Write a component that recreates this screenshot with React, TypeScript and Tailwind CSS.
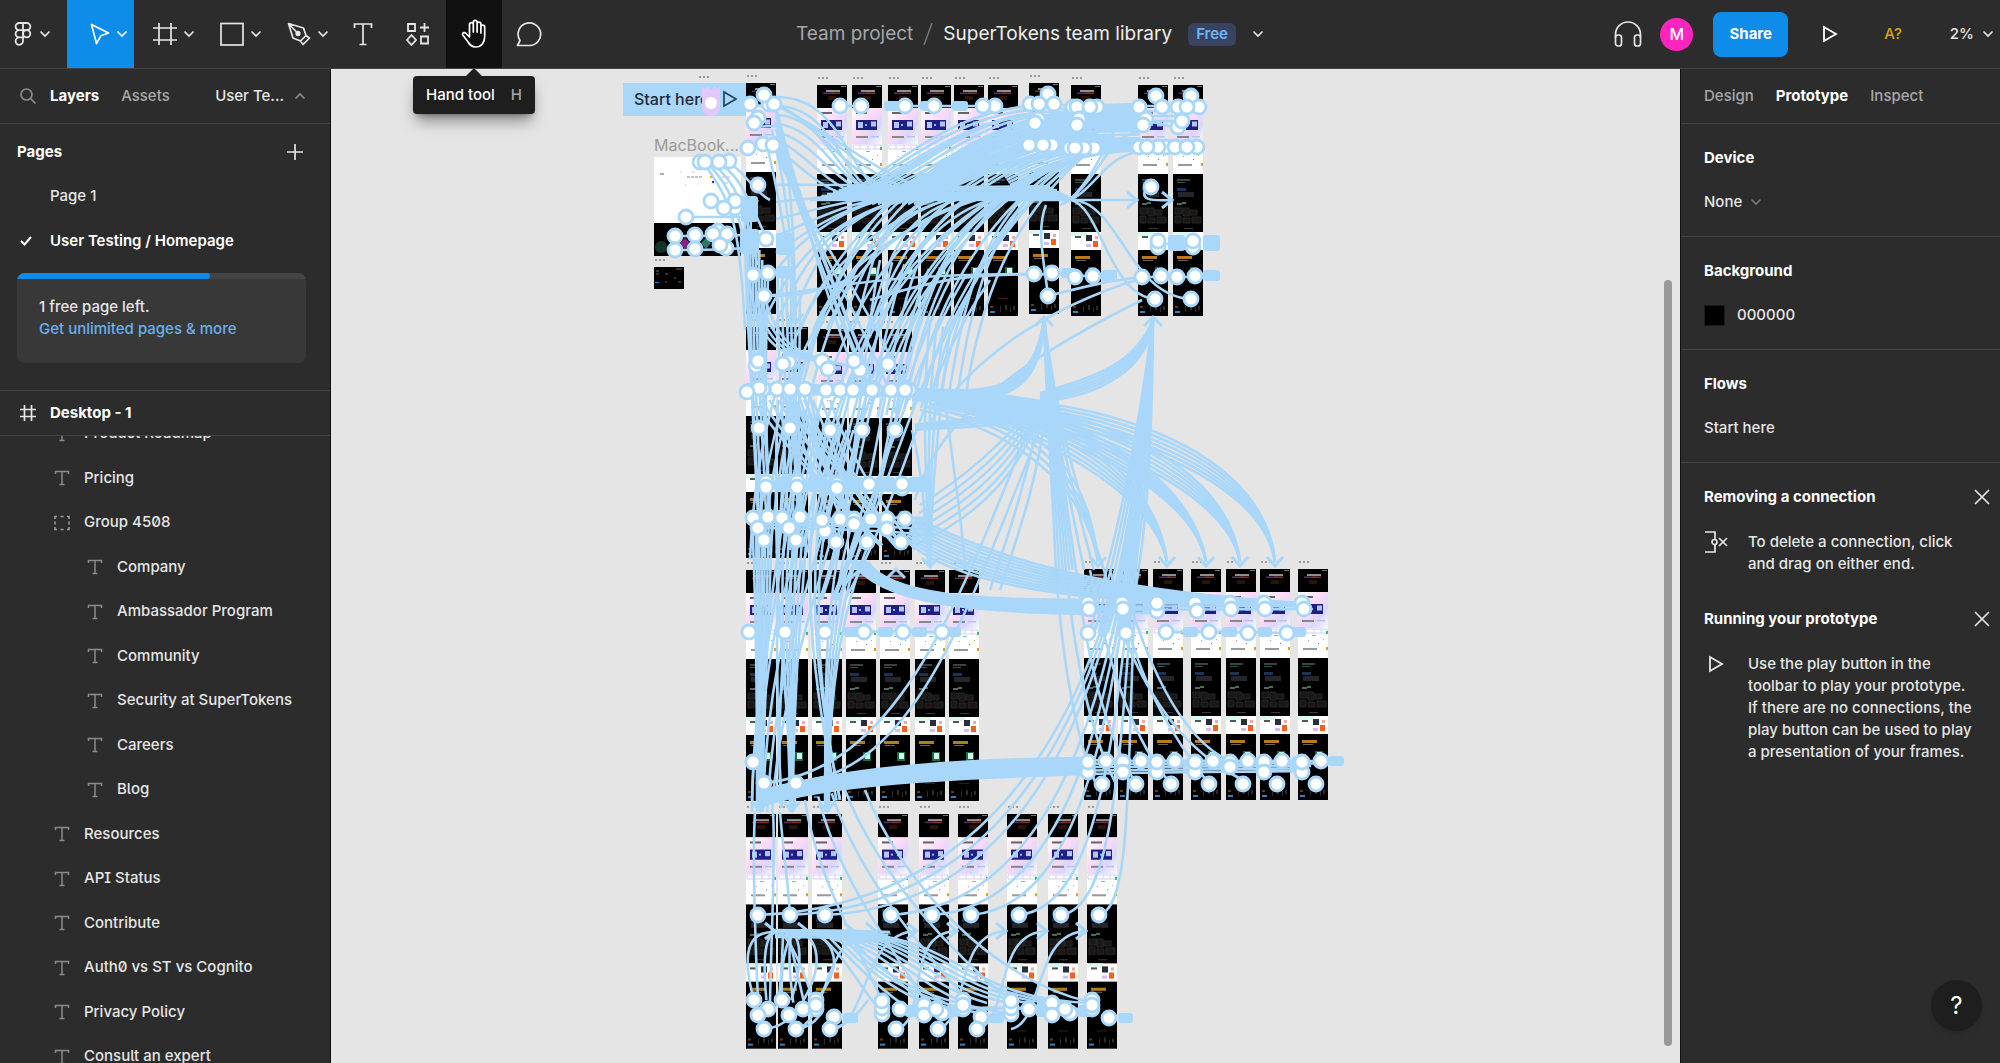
import React from "react";

type P = { className?: string };

const Chevron = ({ className = "" }: P) => (
  <svg className={`h-2 w-3 shrink-0 ${className}`} viewBox="0 0 12 8" fill="none" stroke="currentColor" strokeWidth="1.7">
    <path d="M1.5 1.5 6 6l4.5-4.5" />
  </svg>
);

const svgBase = { fill: "none", stroke: "currentColor", strokeWidth: 1.7 } as const;

const FigmaIcon = () => (
  <svg className="h-6 w-5" viewBox="0 0 20 24" {...svgBase} strokeWidth={1.8}>
    <path d="M10 1H6.2a3.6 3.6 0 0 0 0 7.2H10zM10 1h3.8a3.6 3.6 0 0 1 0 7.2H10zM10 8.2H6.2a3.6 3.6 0 0 0 0 7.2H10zM10 15.4H6.2a3.7 3.7 0 1 0 3.8 3.7z" />
    <circle cx="13.7" cy="11.8" r="3.6" />
  </svg>
);
const MoveIcon = () => (
  <svg className="h-6 w-5" viewBox="0 0 20 24" {...svgBase}>
    <path d="M1.5 2.5 18.5 11l-7.700 2.800L6.500 21.500z" strokeLinejoin="round" />
  </svg>
);
const FrameIcon = () => (
  <svg className="size-6" viewBox="0 0 24 24" {...svgBase}>
    <path d="M6 1v22M18 1v22M0 6h24M0 18h24" />
  </svg>
);
const SquareIcon = () => (
  <svg className="size-6" viewBox="0 0 24 24" {...svgBase}>
    <rect x="1" y="1.500" width="22" height="21.500" />
  </svg>
);
const PenIcon = () => (
  <svg className="size-6" viewBox="0 0 24 24" {...svgBase} strokeLinejoin="round">
    <path d="M1.500 1.500 6 16l7.500 3 5.500-5.500-2.500-7.500zM1.500 1.500l9 9.500M13.500 19l2.500 3.500 6.500-6.500-3.500-2.500" />
    <circle cx="11" cy="11.500" r="1.800" fill="currentColor" />
  </svg>
);
const TextIcon = () => (
  <svg className="size-6" viewBox="0 0 24 24" {...svgBase}>
    <path d="M3.500 6V2h17v4M12 2v20.500M8.500 22.500h7" />
  </svg>
);
const ResourcesIcon = () => (
  <svg className="size-6" viewBox="0 0 24 24" {...svgBase} strokeWidth={1.8}>
    <path d="M2 2h7v7H2zM18.500 1v9M14 5.500h9M15 14.500h7v7h-7zM5.500 13 1 18l4.500 5 4.500-5z" />
  </svg>
);
const HandIcon = () => (
  <svg className="h-[30px] w-7" viewBox="0 0 28 30" {...svgBase} strokeLinecap="round" strokeLinejoin="round">
    <path d="M9.500 16V5.500a1.900 1.900 0 0 1 3.800 0V13M13.300 6V3.300a1.900 1.900 0 0 1 3.800 0V13M17.100 5a1.900 1.900 0 0 1 3.800 0v9M20.900 8a1.900 1.900 0 0 1 3.800 0v9.500c0 6-3.200 10.500-9 10.500-4.500 0-6.300-2.500-8-5.500L2.800 16c-1-1.900 1.500-3.300 3.200-1.500L9.500 18V7" />
  </svg>
);
const CommentIcon = () => (
  <svg className="h-[26px] w-[26px]" viewBox="0 0 26 26" {...svgBase} strokeLinejoin="round">
    <path d="M1.500 24.500h12A11.300 11.300 0 1 0 4 19.500z" />
  </svg>
);
const HeadphonesIcon = () => (
  <svg className="size-7" viewBox="0 0 28 28" {...svgBase}>
    <path d="M1.500 17.500v-3a12.500 12.500 0 0 1 25 0v3" />
    <rect x="1.500" y="15" width="6" height="11" rx="2.500" />
    <rect x="20.500" y="15" width="6" height="11" rx="2.500" />
  </svg>
);
const PlayIcon = ({ className = "" }: P) => (
  <svg className={`h-[18px] w-4 ${className}`} viewBox="0 0 16 18" {...svgBase} strokeWidth={1.8}>
    <path d="M2 2v14l12-7z" />
  </svg>
);
const CloseIcon = () => (
  <svg className="size-4" viewBox="0 0 16 16" {...svgBase}>
    <path d="m1 1 14 14M15 1 1 15" />
  </svg>
);
const LayerText = () => (
  <svg className="size-4 shrink-0 text-[#8a8a8a]" viewBox="0 0 16 16" {...svgBase} strokeWidth={1.5}>
    <path d="M1.500 4V1.500h13V4M8 1.500v13M5.500 14.500h5" />
  </svg>
);
const LayerGroup = () => (
  <svg className="size-4 shrink-0 text-[#9a9a9a]" viewBox="0 0 16 16" {...svgBase} strokeWidth={1.6}>
    <path d="M1 4V1.500h2M6.500 1.500h3M13 1.500h2V4M1 6.500v3M15 6.500v3M1 12v2.500h2M6.500 14.500h3M13 14.500h2V12" />
  </svg>
);

/* ---------- canvas data ---------- */

const BLUE = "#a9d7fa";

const frames: [number, number][] = [
  [746, 83], [817, 85], [852, 85], [888, 85], [921, 85], [954, 85], [988, 85], [1029, 83], [1071, 85], [1138, 85], [1173, 85],
  [746, 327], [778, 327], [817, 329], [849, 329], [882, 329],
  [746, 570], [778, 570], [812, 570], [846, 570], [880, 570], [915, 570], [949, 570],
  [1084, 569], [1118, 569], [1153, 569], [1191, 569], [1226, 569], [1260, 569], [1298, 569],
  [746, 814], [778, 814], [812, 814], [878, 814], [919, 814], [958, 814], [1007, 814], [1048, 814], [1087, 814],
];

const nodes: [number, number][] = [
  [750, 104], [769, 104], [774, 104], [764, 95], [758, 118], [754, 123], [748, 148], [763, 144], [773, 145], [758, 185], [766, 239], [753, 275], [768, 273], [764, 296],
  [700, 162], [729, 161], [705, 162], [719, 162], [735, 208], [711, 201], [735, 201], [724, 208], [686, 217],
  [718, 231], [675, 236], [695, 235], [727, 234], [713, 234], [675, 250], [695, 249], [726, 248], [720, 245],
  [840, 106], [861, 106], [905, 106], [934, 106], [995, 106], [983, 106],
  [1048, 94], [1030, 104], [1054, 104], [1039, 104], [1038, 119], [1035, 123], [1052, 145], [1029, 145], [1043, 145],
  [1073, 107], [1097, 107], [1077, 107], [1090, 107], [1079, 119], [1077, 125], [1070, 148], [1094, 148], [1084, 148], [1075, 148],
  [1156, 96], [1139, 107], [1162, 107], [1146, 119], [1143, 125], [1139, 147], [1166, 147], [1158, 147], [1147, 147], [1151, 187],
  [1191, 96], [1199, 107], [1178, 107], [1187, 107], [1178, 127], [1182, 121], [1175, 147], [1197, 147], [1187, 147],
  [1158, 247], [1158, 241], [1193, 247], [1193, 241],
  [1034, 274], [1052, 273], [1048, 296], [1075, 277], [1093, 276], [1142, 277], [1161, 276], [1177, 277], [1195, 276], [1155, 299], [1191, 299],
  [756, 366], [758, 361], [789, 362], [783, 364], [822, 361], [828, 369], [860, 370], [854, 361], [888, 364],
  [763, 389], [759, 388], [747, 392], [777, 389], [790, 389], [805, 389], [826, 390], [840, 390], [853, 390], [875, 390], [872, 390], [891, 390], [909, 390], [905, 390],
  [759, 428], [790, 428], [830, 430], [862, 430], [895, 430],
  [766, 482], [766, 487], [797, 482], [797, 487], [837, 484], [837, 488], [869, 484], [902, 488], [902, 484],
  [753, 518], [768, 517], [782, 518], [800, 517], [758, 528], [789, 528], [825, 531], [822, 520], [840, 519], [854, 519], [854, 524], [871, 519], [887, 519], [887, 529], [905, 519],
  [764, 540], [796, 540], [836, 542], [867, 542], [901, 542],
  [749, 632], [785, 632], [825, 632], [864, 632], [903, 632], [942, 632], [753, 762], [764, 783], [796, 783],
  [1088, 603], [1089, 609], [1122, 603], [1123, 609], [1157, 611], [1157, 603], [1195, 603], [1197, 611], [1230, 603], [1231, 609], [1264, 603], [1265, 609], [1302, 603], [1304, 609],
  [1088, 633], [1126, 633], [1166, 632], [1209, 632], [1248, 633], [1287, 633],
  [1088, 772], [1088, 762], [1106, 761], [1123, 762], [1123, 772], [1141, 761], [1157, 772], [1157, 762], [1175, 761], [1195, 772], [1195, 762], [1213, 761], [1230, 762], [1230, 767], [1248, 761], [1264, 762], [1264, 772], [1282, 761], [1302, 772], [1302, 762], [1321, 761],
  [1102, 784], [1136, 784], [1171, 784], [1209, 784], [1243, 784], [1277, 784], [1316, 784],
  [758, 915], [790, 915], [825, 915], [891, 915], [932, 915], [971, 915], [1019, 915], [1061, 915], [1099, 915],
  [754, 1000], [768, 1009], [758, 1015], [782, 1000], [803, 1009], [789, 1015], [816, 1000], [816, 1009], [816, 1005], [834, 1017], [764, 1029], [796, 1029], [830, 1029],
  [882, 1014], [882, 1008], [882, 1001], [900, 1009], [896, 1029], [924, 1005], [924, 1015], [942, 1013], [936, 1009], [938, 1029], [963, 1000], [963, 1009], [963, 1005], [981, 1017], [977, 1029],
  [1011, 1014], [1011, 1008], [1011, 1001], [1029, 1009], [1052, 1003], [1052, 1015], [1070, 1013], [1065, 1009], [1092, 1000], [1092, 1009], [1092, 1005], [1109, 1018],
];

const pills: [number, number, number, number][] = [
  [741, 196, 17, 26], [740, 229, 19, 25], [776, 233, 18, 22], [776, 266, 16, 12], [884, 101, 16, 10], [920, 101, 15, 10], [952, 101, 16, 10],
  [1168, 235, 17, 16], [1203, 235, 17, 16], [1061, 268, 15, 10], [1101, 270, 16, 11], [1203, 270, 17, 11],
  [775, 477, 18, 15], [808, 477, 20, 15], [843, 477, 20, 15], [875, 477, 20, 15], [908, 477, 20, 15],
  [844, 627, 16, 10], [878, 627, 15, 10], [912, 627, 15, 10], [947, 627, 14, 10], [1183, 627, 15, 10], [1222, 627, 15, 10], [1258, 627, 14, 10], [1291, 627, 15, 10],
  [1328, 756, 16, 10], [1292, 756, 10, 12], [843, 1013, 15, 10], [989, 1013, 15, 10], [1118, 1013, 15, 10], [905, 1005, 14, 12], [946, 1005, 14, 12], [1036, 1003, 14, 14], [1078, 1005, 14, 12],
];

type Curve = [number, number, number, number, number, number, number, number];

/* each sheaf blends from its first curve to its second in n steps; the last number tangles the far ends */
const sheaves: [Curve, Curve, number, number?][] = [
  /* left column fanning right and down */
  [[776, 97, 850, 97, 850, 190, 900, 197], [776, 150, 800, 160, 820, 200, 880, 200], 7, 0.2],
  [[776, 105, 860, 150, 880, 180, 960, 200], [776, 104, 830, 130, 850, 190, 930, 200], 3],
  [[776, 110, 790, 160, 795, 230, 795, 320], [768, 150, 780, 200, 790, 260, 795, 320], 3],
  [[776, 108, 800, 200, 815, 300, 850, 390], [776, 150, 790, 200, 870, 300, 910, 400], 7, 0.3],
  [[752, 296, 760, 350, 790, 360, 830, 362], [764, 296, 780, 350, 800, 355, 850, 366], 4],
  /* core of the top row */
  [[850, 186, 900, 186, 960, 188, 1050, 186], [810, 200, 900, 200, 990, 200, 1075, 200], 8],
  [[776, 185, 850, 184, 900, 186, 960, 194], [776, 270, 800, 240, 840, 200, 900, 196], 6, 0.2],
  [[850, 193, 900, 160, 960, 108, 1035, 106], [870, 200, 960, 180, 1000, 130, 1060, 128], 12, 0.15],
  [[930, 172, 980, 130, 1050, 106, 1140, 104], [920, 195, 990, 170, 1050, 130, 1140, 128], 13],
  [[860, 204, 960, 160, 1000, 140, 1080, 128], [920, 204, 1000, 160, 1060, 146, 1170, 150], 11, 0.3],
  [[1000, 170, 1040, 146, 1080, 142, 1140, 144], [1010, 185, 1060, 160, 1100, 148, 1170, 150], 7],
  [[1060, 205, 1100, 190, 1100, 155, 1147, 150], [1070, 200, 1110, 160, 1110, 112, 1140, 112], 3],
  [[750, 560, 760, 320, 850, 170, 1010, 135], [830, 540, 880, 330, 930, 230, 1060, 165], 13, 0.35],
  [[860, 420, 880, 330, 940, 210, 1045, 170], [965, 400, 980, 300, 1010, 220, 1085, 155], 13, 0.3],
  [[760, 330, 790, 260, 830, 220, 900, 200], [880, 330, 900, 270, 930, 220, 990, 200], 10, 0.4],
  /* left trunks */
  [[745, 200, 744, 300, 752, 400, 758, 520], [768, 280, 764, 380, 770, 440, 772, 520], 9, 0.2],
  [[778, 270, 776, 340, 784, 430, 788, 520], [800, 290, 800, 360, 800, 440, 806, 520], 6, 0.2],
  [[752, 520, 756, 600, 756, 700, 756, 812], [772, 520, 770, 600, 764, 700, 762, 812], 7, 0.25],
  [[786, 520, 776, 620, 790, 700, 790, 812], [808, 520, 800, 620, 794, 700, 794, 812], 6, 0.25],
  [[845, 520, 822, 620, 826, 700, 825, 812], [870, 540, 838, 620, 828, 700, 829, 812], 5, 0.2],
  [[778, 400, 770, 560, 752, 700, 752, 812], [850, 430, 800, 560, 820, 700, 840, 800], 8, 0.5],
  [[840, 430, 790, 560, 760, 640, 758, 812], [860, 430, 830, 560, 780, 680, 772, 812], 4],
  [[880, 260, 860, 360, 860, 480, 820, 600], [990, 280, 920, 380, 910, 480, 845, 600], 10, 0.3],
  [[752, 400, 790, 450, 830, 500, 880, 545], [830, 400, 850, 460, 880, 500, 915, 550], 10, 0.3],
  [[780, 390, 800, 430, 815, 480, 840, 545], [810, 395, 820, 440, 830, 470, 850, 490], 6, 0.3],
  [[747, 384, 800, 384, 860, 388, 915, 388], [747, 394, 800, 394, 860, 394, 915, 396], 5],
  [[764, 484, 810, 480, 860, 482, 915, 482], [764, 488, 810, 488, 860, 488, 915, 490], 4],
  [[750, 517, 800, 522, 860, 516, 925, 518], [750, 527, 800, 530, 860, 527, 925, 535], 4],
  [[748, 104, 760, 108, 765, 104, 776, 104], [748, 145, 755, 148, 765, 148, 776, 148], 3],
  /* hub under the eighth frame of the top row */
  [[912, 389, 970, 390, 1034, 404, 1044, 318], [912, 400, 980, 400, 1042, 412, 1044, 318], 7],
  [[915, 390, 980, 388, 1010, 398, 1050, 402], [915, 400, 980, 402, 1010, 406, 1050, 408], 6],
  [[915, 425, 980, 416, 1020, 418, 1050, 404], [915, 430, 960, 426, 1010, 430, 1050, 408], 4],
  [[1153, 320, 1136, 362, 1100, 376, 1040, 393], [1153, 320, 1148, 370, 1100, 396, 1040, 402], 6],
  [[1044, 318, 1046, 400, 1052, 480, 1056, 570], [1044, 318, 1054, 420, 1066, 500, 1076, 570], 7],
  [[1044, 318, 1054, 430, 1070, 500, 1084, 570], [1044, 318, 1056, 420, 1080, 500, 1104, 570], 3],
  [[960, 396, 1130, 400, 1266, 460, 1275, 562], [940, 402, 1120, 424, 1262, 480, 1275, 562], 6],
  [[960, 396, 1110, 410, 1230, 470, 1240, 562], [940, 404, 1090, 430, 1226, 490, 1240, 562], 6],
  [[950, 396, 1090, 410, 1194, 480, 1206, 562], [930, 404, 1070, 430, 1192, 490, 1206, 562], 6],
  [[950, 398, 1070, 410, 1158, 480, 1167, 562], [925, 406, 1040, 430, 1152, 490, 1167, 562], 6],
  [[940, 402, 1050, 420, 1090, 480, 1098, 562], [920, 410, 1020, 430, 1086, 490, 1098, 562], 4],
  [[1035, 400, 1010, 440, 960, 480, 920, 505], [1040, 410, 1020, 480, 970, 520, 915, 545], 6],
  [[1040, 408, 1030, 470, 1010, 530, 990, 590], [1046, 408, 1040, 470, 1020, 530, 1000, 590], 2],
  [[930, 320, 920, 420, 928, 500, 929, 566], [950, 330, 938, 420, 930, 500, 931, 566], 4],
  [[912, 430, 922, 470, 926, 520, 928, 566], [945, 400, 952, 460, 962, 520, 965, 566], 2],
  [[915, 500, 930, 450, 960, 390, 1142, 300], [925, 430, 970, 360, 1040, 310, 1142, 278], 2],
  /* towards the right-hand group of the third row */
  [[915, 518, 1000, 558, 1090, 590, 1300, 603], [905, 540, 960, 590, 1100, 606, 1300, 604], 10],
  [[868, 562, 890, 596, 980, 600, 1090, 600], [850, 560, 880, 606, 980, 612, 1090, 614], 9],
  [[1088, 603, 1150, 604, 1230, 603, 1303, 603], [1088, 610, 1150, 610, 1230, 609, 1303, 609], 3],
  [[1088, 608, 1110, 608, 1140, 608, 1160, 608], [1088, 613, 1110, 613, 1140, 613, 1160, 613], 3],
  [[764, 790, 840, 770, 940, 759, 1090, 758], [764, 805, 830, 785, 940, 778, 1090, 774], 13],
  [[1088, 760, 1150, 762, 1230, 760, 1320, 761], [1088, 774, 1150, 772, 1230, 772, 1302, 771], 5],
  [[1056, 570, 1062, 660, 1076, 740, 1096, 784], [1076, 570, 1090, 680, 1110, 740, 1136, 784], 3],
  [[1090, 570, 1110, 680, 1140, 750, 1171, 784], [1104, 570, 1130, 680, 1180, 750, 1243, 780], 2],
  [[1120, 570, 1150, 680, 1190, 750, 1240, 765], [1110, 570, 1140, 680, 1160, 720, 1209, 784], 2],
  [[1153, 320, 1136, 450, 1116, 540, 1090, 632], [1153, 320, 1152, 450, 1146, 560, 1126, 632], 9],
  [[764, 783, 900, 770, 960, 600, 1040, 400], [796, 783, 920, 770, 970, 600, 1044, 420], 2],
  [[764, 296, 820, 292, 860, 274, 1034, 274], [870, 300, 950, 275, 980, 274, 1052, 274], 2],
  [[1040, 104, 1060, 106, 1090, 106, 1140, 104], [1040, 145, 1060, 148, 1090, 146, 1140, 146], 12],
  [[1140, 106, 1160, 106, 1180, 106, 1199, 106], [1143, 121, 1155, 121, 1165, 121, 1182, 121], 4],
  [[1140, 147, 1160, 147, 1180, 147, 1199, 147], [1158, 244, 1170, 244, 1180, 244, 1199, 244], 2],
  [[1071, 200, 1100, 206, 1110, 296, 1155, 299], [1075, 200, 1120, 206, 1130, 296, 1191, 299], 2],
  [[840, 106, 845, 106, 855, 106, 861, 106], [905, 106, 925, 106, 960, 106, 995, 106], 2],
  [[1034, 274, 1060, 274, 1070, 276, 1095, 276], [1142, 277, 1160, 277, 1170, 277, 1195, 277], 2],
  [[764, 296, 810, 296, 820, 290, 860, 275], [686, 217, 700, 217, 720, 217, 745, 217], 2],
  [[719, 162, 740, 160, 750, 190, 770, 200], [705, 165, 730, 200, 740, 220, 745, 330], 5],
  [[675, 236, 700, 236, 720, 236, 745, 235], [675, 250, 700, 250, 720, 250, 745, 248], 2],
  [[864, 632, 880, 631, 900, 631, 942, 632], [1166, 632, 1200, 631, 1250, 632, 1290, 633], 2],
  /* bottom row */
  [[773, 812, 776, 860, 770, 960, 770, 1009], [755, 812, 752, 860, 756, 960, 758, 1000], 2],
  [[805, 800, 815, 870, 850, 930, 882, 1001], [845, 790, 880, 880, 960, 960, 1011, 1001], 4],
  [[865, 790, 900, 880, 990, 980, 1090, 1002], [780, 812, 784, 860, 788, 880, 790, 915], 2],
  [[770, 932, 860, 928, 880, 970, 924, 1003], [830, 932, 960, 930, 960, 1000, 1092, 1003], 9],
  [[775, 930, 810, 930, 840, 930, 890, 932], [775, 937, 810, 937, 840, 937, 885, 940], 4],
  [[816, 932, 850, 960, 860, 990, 882, 1012], [850, 932, 880, 990, 960, 1005, 1011, 1014], 5],
  [[754, 1000, 740, 950, 750, 932, 773, 932], [816, 1000, 850, 960, 830, 932, 800, 932], 6],
  [[782, 1000, 780, 950, 790, 932, 800, 932], [816, 1008, 800, 960, 790, 940, 780, 932], 4],
  [[936, 1008, 960, 1010, 980, 1006, 1011, 1008], [1029, 1008, 1050, 1008, 1070, 1010, 1092, 1008], 5],
];

const arrows: [number, number, "r" | "u" | "d"][] = [
  [1137, 200, "r"], [1172, 200, "r"], [1044, 316, "u"], [1153, 316, "u"],
  [1098, 567, "d"], [1167, 567, "d"], [1206, 567, "d"], [1240, 567, "d"], [1275, 567, "d"],
  [860, 568, "u"], [896, 568, "u"], [930, 568, "d"], [965, 568, "d"], [795, 324, "d"],
  [760, 812, "d"], [792, 812, "d"], [827, 812, "d"],
  [775, 931, "r"], [808, 931, "r"], [854, 931, "r"], [876, 931, "r"], [917, 931, "r"], [957, 931, "r"], [1006, 931, "r"], [1047, 931, "r"], [1086, 931, "r"],
];

const arrowPath = (x: number, y: number, d: "r" | "u" | "d") =>
  d === "r" ? `M${x - 10} ${y - 8}l10 8l-10 8` : d === "u" ? `M${x - 9} ${y + 10}l9 -9l9 9` : `M${x - 8} ${y - 10}l8 9l8 -9`;

const toPath = (c: number[]) => `M${c[0]} ${c[1]}C${c[2]} ${c[3]} ${c[4]} ${c[5]} ${c[6]} ${c[7]}`;

const paths: string[] = [];
sheaves.forEach(([a, b, n, tangle = 0]) => {
  for (let i = 0; i < n; i++) {
    const t = i / (n - 1);
    const far = Math.min(1, Math.max(0, t + tangle * Math.sin(i * 7.3 + n)));
    paths.push(toPath(a.map((v, k) => Math.round((v + (b[k] - v) * (k < 4 ? t : far)) * 10) / 10)));
  }
});
/* lines that rise from the bottom row to the frame above */
[758, 790, 825, 891, 932, 971, 1019, 1061, 1099].forEach((x) =>
  paths.push(toPath([x, 915, Math.round(x + (1170 - x) * 0.6), 905, 1120, 690, 1148, 400])),
);
[[937, 1007], [896, 957], [977, 1047], [1011, 1087], [834, 917], [796, 876]].forEach(([x, tip]) =>
  paths.push(toPath([x, 1029, x + 34, 1022, tip - 55, 932, tip, 931])),
);
paths.push("M1146 188C1140 200 1150 201 1171 200", "M1075 200H1136", "M1048 296C1044 260 1036 230 1046 205", "M1048 296C1080 288 1100 282 1142 277");
paths.push("M764 1029Q780 1028 790 1017", "M796 1029Q812 1028 822 1012", "M830 1029Q850 1026 868 1000", "M1143 125C1155 118 1165 128 1178 127");

const Thumb = ({ x, y }: { x: number; y: number }) => (
  <g transform={y > 800 ? `translate(${x} ${y}) scale(1 1.016)` : `translate(${x} ${y})`}>
    <g fill="#9a9a9a">
      <rect x="1" y="-8" width="2" height="2" />
      <rect x="5" y="-8" width="2" height="2" />
      <rect x="9" y="-8" width="2" height="2" />
    </g>
    <rect width="30" height="231" fill="#fff" />
    <rect width="30" height="23" />
    <rect x="9" y="5" width="14" height="2" fill="#8f8f8f" />
    <rect x="6" y="7.500" width="12" height="1.500" fill="#5d2b64" />
    <rect x="14" y="7.500" width="9" height="1.500" fill="#8c2c20" />
    <rect x="11" y="11" width="8" height="4" fill="#2a1308" />
    <rect x="24" y="1" width="5" height="1" fill="#777" />
    <rect y="23" width="30" height="36" fill="url(#wash)" />
    <rect x="4" y="27" width="11" height="2" fill="#666" />
    <rect x="4" y="35" width="21" height="10" fill="#1c1f86" />
    <rect x="6" y="37" width="5" height="6" fill="#b9c4ee" />
    <rect x="19" y="36.500" width="5" height="5" fill="#b9c4ee" />
    <rect x="13" y="39" width="2" height="2" fill="#9fb0ff" />
    <rect x="4" y="51" width="12" height="2" fill="#888" />
    <rect x="19" y="51" width="8" height="1.500" fill="#c4bdf0" />
    <path d="M1 60h28v4H1zM8 60v4M16 60v4M23 60v4" fill="none" stroke="#d6cdf5" strokeWidth="1" />
    <rect x="14" y="66" width="4" height="1" fill="#6ad19b" />
    <rect x="28" y="62" width="2" height="3" fill="#28c76f" />
    <rect x="10" y="71" width="1" height="1" fill="#f27d9b" />
    <rect x="20" y="74" width="1" height="1" fill="#5b7cff" />
    <rect x="25" y="70" width="1" height="1" fill="#7ed957" />
    <rect x="5" y="79" width="14" height="2" fill="#999" />
    <rect x="28" y="78" width="2" height="3" fill="#d6a21c" />
    <rect y="89" width="30" height="58" />
    <rect x="4" y="94" width="13" height="2" fill="#3b4046" />
    <rect x="4" y="97" width="8" height="1" fill="#2a5553" />
    <rect x="4" y="103" width="9" height="3" fill="#1d3257" />
    <rect x="5" y="107" width="16" height="5" fill="#24262b" />
    <rect x="4" y="118" width="5" height="2" fill="#5f6368" />
    <rect x="9" y="117" width="4" height="2" fill="#377a4c" />
    <path d="M2 123h7v6H2zM10 123h6v8h-6zM17 125h7v5h-7zM2 131h6v7H2zM10 133h7v5h-7zM19 132h9v6h-9z" fill="#17181a" stroke="#2b2420" strokeWidth="1" />
    <rect x="11" y="143" width="9" height="1" fill="#3a3a3a" />
    <rect y="147" width="16" height="4" fill="#dcf7ee" />
    <rect x="4" y="151" width="6" height="2" fill="#555" />
    <rect x="15" y="150" width="6" height="6" fill="#2a2d3d" />
    <rect x="24" y="151" width="3" height="3" fill="#f7a8a0" />
    <rect x="22" y="156" width="5" height="6" fill="#f4601e" />
    <rect x="15" y="159" width="5" height="3" fill="#d9b8fa" />
    <rect y="165" width="30" height="66" />
    <rect x="4" y="171" width="15" height="3" fill="#b87a1e" />
    <rect x="5" y="175" width="10" height="1" fill="#666" />
    {y < 800 && <rect x="17" y="182" width="8" height="9" fill="#1b6a49" />}
    {y < 800 && <rect x="19" y="183" width="5" height="6" fill="#d6f5e5" />}
    <rect x="10" y="213" width="10" height="1" fill="#3b1a10" />
    <rect x="2" y="221" width="3" height="2" fill="#5b3a20" />
    <rect x="2" y="226" width="5" height="2" fill="#2b84c6" />
    <path d="M12 221h1v6h-1zM17 220h2v5h-2zM22 222h1v5h-1zM25 221h2v4h-2z" fill="#2b2b2b" />
  </g>
);

const Canvas = () => (
  <svg className="absolute left-0 top-0 h-[995px] w-[1349px]" viewBox="331 69 1349 995" aria-label="Prototype connections">
    <defs>
      <linearGradient id="wash" x1="0" y1="0" x2="1" y2="1">
        <stop offset="0" stopColor="#fff" />
        <stop offset="0.450" stopColor="#fbd9f6" />
        <stop offset="0.700" stopColor="#d9d6ff" />
        <stop offset="1" stopColor="#f6fbff" />
      </linearGradient>
    </defs>
    <rect x="623" y="83" width="124" height="33" fill={BLUE} />
    <text x="634" y="105" fontSize="16" fontWeight="500" fill="#1e2a38">Start here</text>
    <path d="M724 92v14l12-7z" fill="none" stroke="#26435c" strokeWidth="1.700" />
    <path d="M702 86q3 5 5 0l4 5l4-5q2 5 5 0v22a9 8 0 0 1-18 0z" fill="#e2c8fb" />
    <circle cx="711" cy="103" r="6" fill="#fff" />
    <g fill="#9a9a9a"><rect x="699" y="76" width="2" height="2" /><rect x="703" y="76" width="2" height="2" /><rect x="707" y="76" width="2" height="2" /></g>
    <text x="654" y="151" fontSize="16" fontWeight="400" fill="#9a9a9a">MacBook...</text>
    <rect x="654" y="157" width="87" height="66" fill="#fff" />
    <path d="M660 174h4" stroke="#51579b" />
    <path d="M687 177h15" stroke="#888" strokeDasharray="3 1" />
    <path d="M680 172h1M692 172h2M685 185h1M698 184h1M722 177h8M724 183h4" stroke="#f0a3c4" />
    <rect x="710" y="176" width="4" height="2" fill="#e0b12c" />
    <rect x="712" y="181" width="2" height="2" fill="#2b2be0" />
    <rect x="654" y="223" width="87" height="33" />
    <circle cx="661" cy="247" r="6" fill="#1c4a36" opacity="0.700" />
    <path d="m685 238 5 5-5 6-5-6z" fill="#8a1f86" />
    <path d="m706 238 5 5-5 6-5-6z" fill="#2b7a66" />
    <path d="m737 240 3 3-3 5z" fill="#a02a1a" />
    <g fill="#9a9a9a"><rect x="655" y="259" width="2" height="2" /><rect x="659" y="259" width="2" height="2" /><rect x="663" y="259" width="2" height="2" /></g>
    <rect x="654" y="267" width="30" height="22" />
    <path d="M656 271h3M656 274h3M665 274h3M676 269h6M674 278h2M678 282h3M665 282h2" stroke="#666" />
    <rect x="655" y="282" width="4" height="1" fill="#2b84c6" />
    {frames.map(([x, y]) => <Thumb key={`${x}-${y}`} x={x} y={y} />)}
    <g fill="none" stroke={BLUE} strokeWidth="2.600">
      {paths.map((d, i) => <path key={i} d={d} />)}
      {arrows.map(([x, y, d]) => <path key={`${x}-${y}`} d={arrowPath(x, y, d)} strokeWidth="3" />)}
    </g>
    <g fill={BLUE}>
      {pills.map(([x, y, w, h]) => <rect key={`${x}-${y}`} x={x} y={y} width={w} height={h} rx="3" />)}
    </g>
    <g fill="#fff" stroke={BLUE} strokeWidth="2.800">
      {nodes.map(([x, y]) => <circle key={`${x}-${y}`} cx={x} cy={y} r="7" />)}
    </g>
  </svg>
);

/* ---------- page ---------- */

const tools: { label: string; icon: React.ReactNode; active?: boolean }[] = [
  { label: "Main menu", icon: <FigmaIcon /> },
  { label: "Move", icon: <MoveIcon />, active: true },
  { label: "Frame", icon: <FrameIcon /> },
  { label: "Rectangle", icon: <SquareIcon /> },
  { label: "Pen", icon: <PenIcon /> },
];

const layers: { name: string; depth: number; group?: boolean }[] = [
  { name: "Product Roadmap", depth: 0 },
  { name: "Pricing", depth: 0 },
  { name: "Group 4508", depth: 0, group: true },
  { name: "Company", depth: 1 },
  { name: "Ambassador Program", depth: 1 },
  { name: "Community", depth: 1 },
  { name: "Security at SuperTokens", depth: 1 },
  { name: "Careers", depth: 1 },
  { name: "Blog", depth: 1 },
  { name: "Resources", depth: 0 },
  { name: "API Status", depth: 0 },
  { name: "Contribute", depth: 0 },
  { name: "Auth0 vs ST vs Cognito", depth: 0 },
  { name: "Privacy Policy", depth: 0 },
  { name: "Consult an expert", depth: 0 },
];

const Section = ({ title, children }: { title: string; children: React.ReactNode }) => (
  <section className="border-b border-[#444] py-3">
    <h2 className="flex h-11 items-center font-bold text-white">{title}</h2>
    <div className="flex h-11 items-center">{children}</div>
  </section>
);

const Tip = ({ title, icon, children }: { title: string; icon: React.ReactNode; children: React.ReactNode }) => (
  <section className="pt-3">
    <div className="flex h-11 items-center justify-between">
      <h2 className="font-bold text-white">{title}</h2>
      <button type="button" aria-label={`Dismiss ${title}`}><CloseIcon /></button>
    </div>
    <div className="flex gap-5 pt-3 pb-2.5">
      <span className="flex h-[22px] w-6 shrink-0 items-center justify-center">{icon}</span>
      <p className="leading-[22px]">{children}</p>
    </div>
  </section>
);

export default function App() {
  return (
    <div className="flex h-screen flex-col overflow-hidden bg-[#2c2c2c] font-['Inter',sans-serif] text-[15px] font-medium text-[#e6e6e6]">
      <header className="flex h-[69px] shrink-0 items-stretch border-b border-[#444]">
        <nav className="flex flex-1" aria-label="Tools">
          {tools.map((t) => (
            <button
              key={t.label}
              type="button"
              aria-label={t.label}
              className={`flex w-[67px] items-center justify-end gap-1.5 pr-1.5 ${t.active ? "bg-[#0d8ce9] text-white" : "first:pr-4"}`}
            >
              {t.icon}
              <Chevron />
            </button>
          ))}
          <button type="button" aria-label="Text" className="flex w-[55px] items-center justify-center"><TextIcon /></button>
          <button type="button" aria-label="Resources" className="flex w-14 items-center justify-center"><ResourcesIcon /></button>
          <div className="relative flex w-14">
            <button type="button" aria-label="Hand tool" className="flex w-full items-center justify-center bg-[#111] text-white"><HandIcon /></button>
            <div role="tooltip" className="absolute left-1/2 top-[76px] z-10 flex h-[38px] w-[122px] -translate-x-1/2 items-center justify-center gap-4 whitespace-nowrap rounded bg-[#1e1e1e] text-white shadow-lg shadow-black/40">
              <svg className="absolute -top-2 left-1/2 h-2 w-4 -translate-x-1/2" viewBox="0 0 16 8"><path d="M0 8 8 0l8 8z" fill="#1e1e1e" /></svg>
              <span>Hand tool</span>
              <span className="text-[#a8a8a8]">H</span>
            </div>
          </div>
          <button type="button" aria-label="Comment" className="flex w-[54px] items-center justify-center"><CommentIcon /></button>
        </nav>
        <div className="flex items-center pl-[66px] text-[19px] font-normal">
          <a href="#project" className="text-[#a6a6a6]">Team project</a>
          <svg className="mx-2.5 h-6 w-2.5" viewBox="0 0 10 24" fill="none" stroke="#777" strokeWidth="1.500"><path d="M9 1 1 23" /></svg>
          <h1 className="text-[#ededed]">SuperTokens team library</h1>
          <span className="ml-4 flex h-[23px] items-center rounded-md bg-[#394360] px-2 text-[15px] font-semibold text-[#6cb6f5]">Free</span>
          <button type="button" aria-label="File menu" className="ml-4 flex"><Chevron /></button>
        </div>
        <div className="flex flex-1 items-center justify-end pr-1.5">
          <button type="button" aria-label="Audio"><HeadphonesIcon /></button>
          <span className="ml-[18px] flex size-[33px] items-center justify-center rounded-full bg-[#ff24bd] text-base text-white">M</span>
          <button type="button" className="ml-5 h-[45px] w-[75px] rounded-lg bg-[#0d8ce9] font-bold text-white">Share</button>
          <button type="button" aria-label="Present" className="ml-[34px] text-white"><PlayIcon /></button>
          <button type="button" aria-label="Missing fonts" className="ml-[46px] text-[#d6a512]">A?</button>
          <button type="button" className="ml-12 flex items-center gap-2">2%<Chevron /></button>
        </div>
      </header>

      <div className="flex min-h-0 flex-1">
        <aside className="flex w-[331px] shrink-0 flex-col border-r border-[#111]">
          <div className="flex h-[55px] shrink-0 items-center border-b border-[#444] pl-5 pr-6">
            <svg className="size-4 text-[#8a8a8a]" viewBox="0 0 16 16" {...svgBase}><circle cx="6.500" cy="6.500" r="5.500" /><path d="m10.500 10.500 5 5" /></svg>
            <button type="button" className="ml-3.5 font-bold text-white">Layers</button>
            <button type="button" className="ml-[22px] text-[#a8a8a8]">Assets</button>
            <button type="button" className="ml-auto flex items-center gap-2.5">User Te...<Chevron className="rotate-180 text-[#8a8a8a]" /></button>
          </div>
          <div className="shrink-0 border-b border-[#444] pt-1.5 pb-[27px]">
            <div className="flex h-11 items-center justify-between pl-[17px] pr-[27px]">
              <h2 className="font-bold text-white">Pages</h2>
              <button type="button" aria-label="Add page"><svg className="size-4" viewBox="0 0 16 16" {...svgBase}><path d="M8 0v16M0 8h16" /></svg></button>
            </div>
            <button type="button" className="flex h-[45px] w-full items-center pl-[50px]">Page 1</button>
            <button type="button" className="flex h-11 w-full items-center pl-5 font-semibold text-white">
              <svg className="mr-[18px] size-3" viewBox="0 0 12 12" {...svgBase} strokeWidth={2}><path d="m1 6 3.500 3.500L11 2" /></svg>
              User Testing / Homepage
            </button>
            <div className="mx-[17px] mt-2.5 mr-6 overflow-hidden rounded-lg bg-[#383838]">
              <div className="h-1.5 bg-[#444]"><div className="h-full w-2/3 rounded-r bg-[#0d8ce9]" /></div>
              <div className="px-[22px] pt-[17px] pb-[23px] leading-[22px]">
                <p>1 free page left.</p>
                <a href="#upgrade" className="block text-[#6cb0e8]">Get unlimited pages &amp; more</a>
              </div>
            </div>
          </div>
          <div className="flex h-[45px] shrink-0 items-center gap-3.5 border-b border-[#444] pl-5">
            <svg className="size-4" viewBox="0 0 16 16" {...svgBase}><path d="M4.500 0v16M11.500 0v16M0 4.500h16M0 11.500h16" /></svg>
            <h2 className="font-bold text-white">Desktop - 1</h2>
          </div>
          <div className="min-h-0 flex-1 overflow-hidden">
            <ul className="-mt-[25px] [font-feature-settings:'ss02','zero']">
              {layers.map((l) => (
                <li key={l.name} className="h-[45px] even:h-11">
                  <button type="button" className={`flex h-full w-full items-center gap-3.5 whitespace-nowrap ${l.depth ? "pl-[87px]" : "pl-[54px]"}`}>
                    {l.group ? <LayerGroup /> : <LayerText />}
                    {l.name}
                  </button>
                </li>
              ))}
            </ul>
          </div>
        </aside>

        <main className="relative min-w-0 flex-1 overflow-hidden bg-[#e5e5e5]">
          <Canvas />
          <div className="absolute right-2 top-[211px] bottom-[17px] w-2 rounded-full bg-[#999]" />
        </main>

        <aside className="w-[320px] shrink-0 border-l border-[#111]">
          <div className="flex h-[55px] items-center gap-[22px] border-b border-[#444] pl-[23px] text-[#a8a8a8]">
            <button type="button">Design</button>
            <button type="button" className="font-bold text-white">Prototype</button>
            <button type="button">Inspect</button>
          </div>
          <div className="[&>section]:pl-[23px] [&>section]:pr-2.5">
            <Section title="Device">
              <button type="button" className="flex items-center gap-2">None<Chevron className="text-[#777]" /></button>
            </Section>
            <Section title="Background">
              <span className="mr-3 size-[21px] border border-[#1c1c1c] bg-black" />000000
            </Section>
            <Section title="Flows">Start here</Section>
            <Tip
              title="Removing a connection"
              icon={<svg className="h-6 w-6" viewBox="0 0 24 24" {...svgBase}><path d="M1 2h10v7M1 22h10v-7M15 8l8 8M23 8l-8 8" /><circle cx="10.500" cy="12" r="2.500" /></svg>}
            >
              To delete a connection, click<br />and drag on either end.
            </Tip>
            <Tip title="Running your prototype" icon={<PlayIcon />}>
              Use the play button in the<br />toolbar to play your prototype.<br />If there are no connections, the<br />play button can be used to play<br />a presentation of your frames.
            </Tip>
          </div>
        </aside>
      </div>
      <button type="button" aria-label="Help" className="absolute bottom-8 right-[18px] flex size-[51px] items-center justify-center rounded-full bg-[#1e1e1e] text-2xl font-normal text-white shadow-md">?</button>
    </div>
  );
}
